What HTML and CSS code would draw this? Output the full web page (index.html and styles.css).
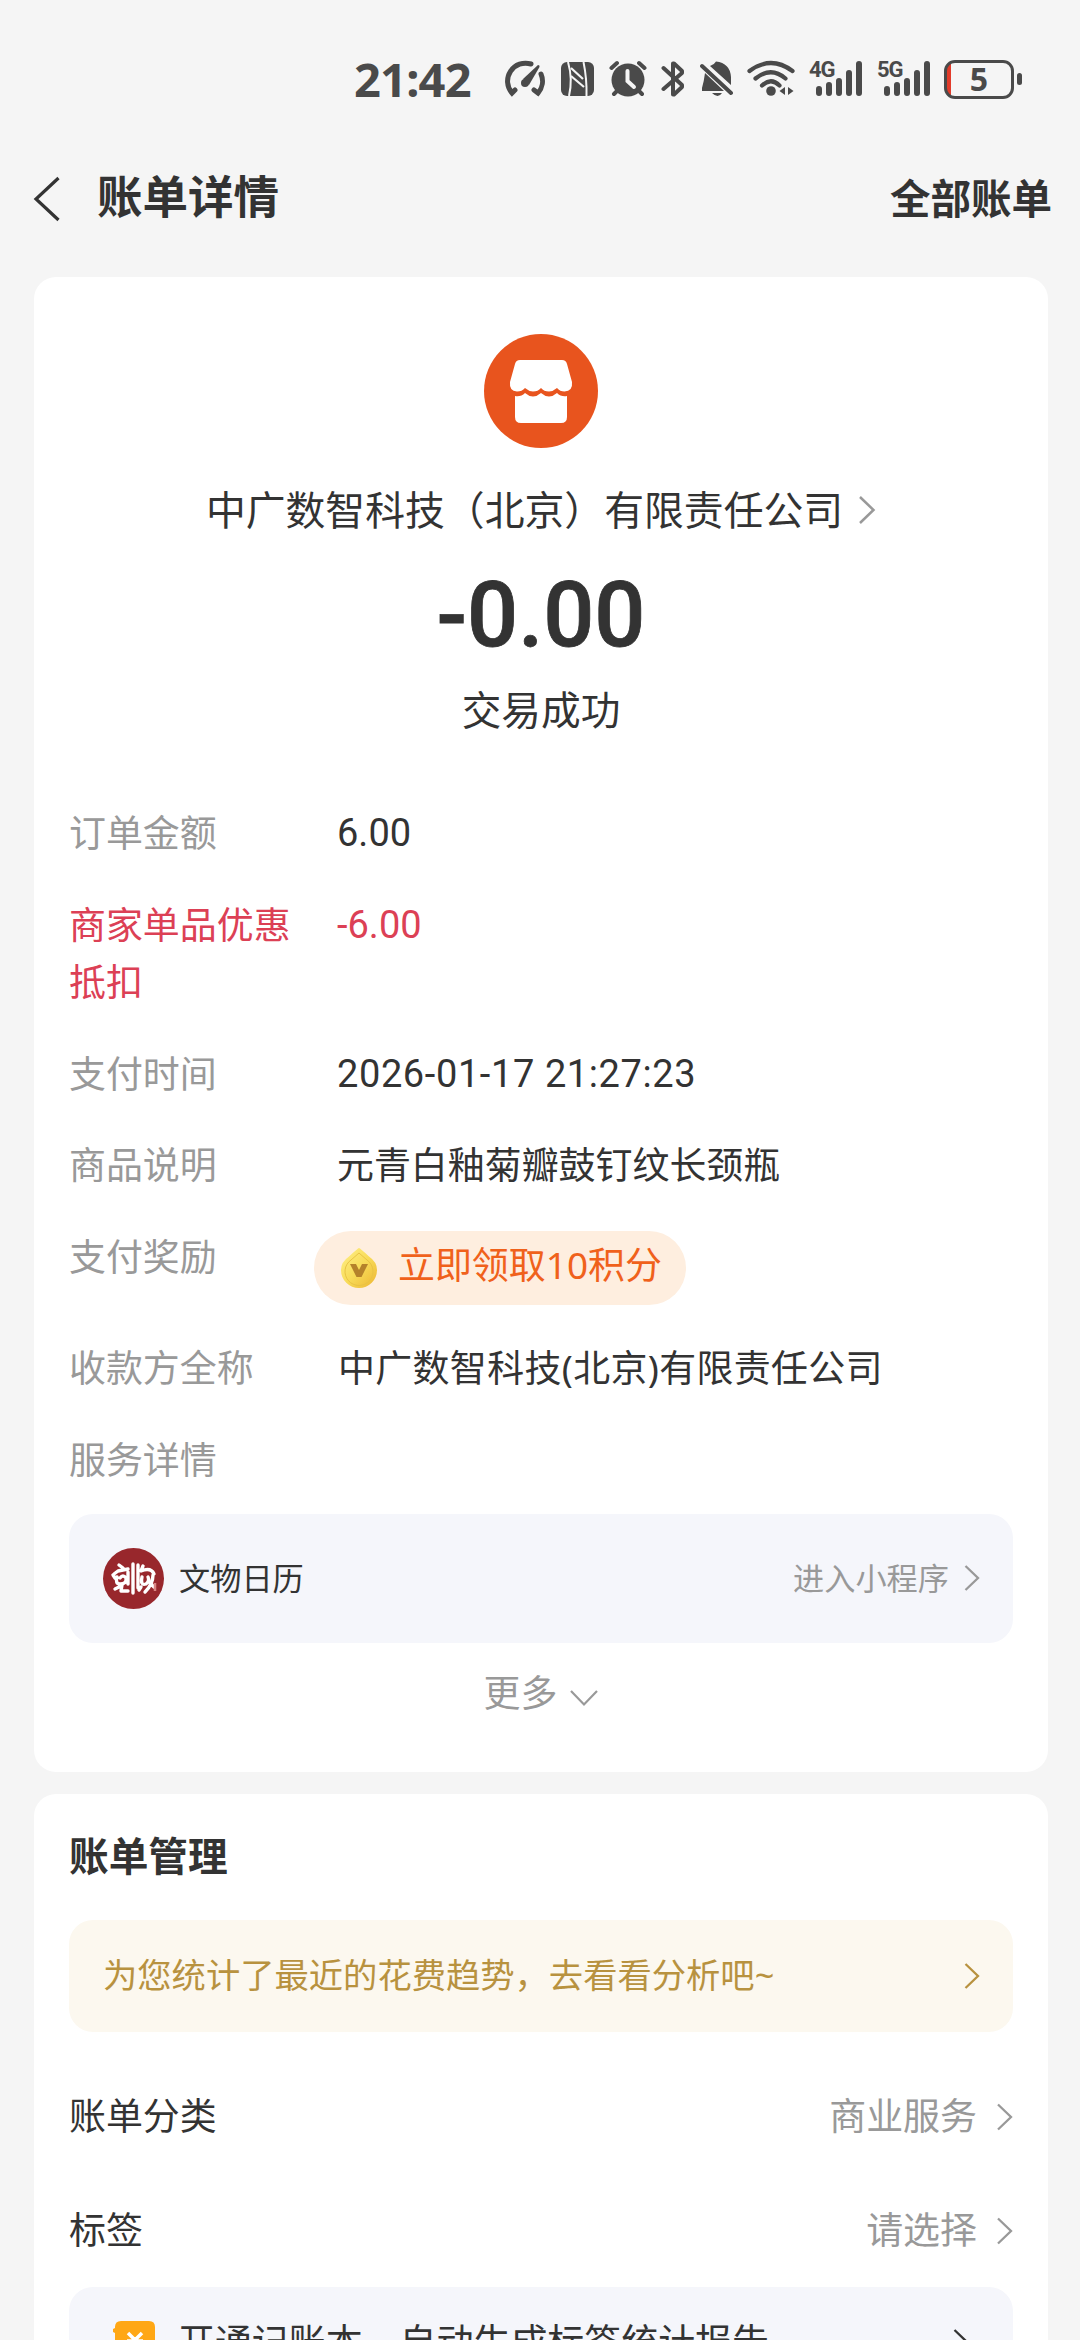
FILE: index.html
```html
<!DOCTYPE html>
<html lang="zh-CN">
<head>
<meta charset="utf-8">
<title>账单详情</title>
<link rel="stylesheet" href="styles.css">
</head>
<body>
<div class="screen">
  <div class="statusbar">
    <span class="clock">21:42</span>
    <svg class="gauge" width="42" height="40" viewBox="0 0 42 40" fill="none" stroke="#4a4a4a" stroke-width="5" stroke-linecap="round"><path d="M27 5A18 18 0 0 0 8 34L11 31M37 15A18 18 0 0 1 34 34L30 31"/><circle cx="21" cy="24" r="4" fill="#4a4a4a" stroke="none"/><path d="M19 20L34 6Q36 6 35.500 8L25 26Z" fill="#4a4a4a" stroke="none"/></svg>
    <svg class="nfc" width="33" height="40" viewBox="0 0 33 40"><rect y="3" width="33" height="34" rx="6" fill="#4a4a4a"/><path d="M7 3Q12 20 8 37M22.500 3Q26 20 25.500 37" stroke="#f5f5f5" stroke-width="2" fill="none"/><path d="M10 9L22 20M10 17L23 28" stroke="#f5f5f5" stroke-width="2.200"/></svg>
    <svg class="alarm" width="38" height="40" viewBox="0 0 38 40"><circle cx="19" cy="21" r="16.500" fill="#4a4a4a"/><path d="M2.500 9L8 4M35.500 9L30 4M8 32L5 35M30 32L33 35" stroke="#4a4a4a" stroke-width="4" stroke-linecap="round"/><path d="M18.500 12V22L25 28" fill="none" stroke="#f5f5f5" stroke-width="4" stroke-linecap="round"/></svg>
    <svg class="bluetooth" width="24" height="40" viewBox="0 0 24 40" fill="none" stroke="#4a4a4a" stroke-width="4" stroke-linecap="round" stroke-linejoin="round"><path d="M2.500 9L21 26V28L13 35.500H12V4.500H13L21 12V14L2.500 30"/></svg>
    <svg class="bell" width="33" height="40" viewBox="0 0 33 40" fill="#4a4a4a"><path d="M5 14Q4 22 2 29V32H24ZM10 7Q14 6 16 2.500Q30 4 31 18V26ZM12 34H22Q18 40 12 34Z"/><path d="M2 7L31 34" stroke="#4a4a4a" stroke-width="4" stroke-linecap="round"/></svg>
    <svg class="wifi" width="48" height="40" viewBox="0 0 48 40" fill="none" stroke="#4a4a4a" stroke-width="4.200" stroke-linecap="round"><path d="M2.500 12Q24-4 45.500 12M8.500 19.500Q24 7 38.500 19.500M15 26.500Q24 18 32.500 26.500"/><circle cx="24" cy="32" r="4.800" fill="#4a4a4a" stroke="none"/><path d="M38 28V36L32.500 32ZM41 28V36L46.500 32Z" fill="#4a4a4a" stroke="none"/></svg>
    <div class="signal"><span class="net">4G</span><svg width="46" height="40" viewBox="0 0 46 40" stroke="#4a4a4a" stroke-width="6" stroke-linecap="round"><path d="M3 30V34M13 26V34M23 22V34M33 14V34M43 5V34"/></svg></div>
    <div class="signal second"><span class="net">5G</span><svg width="46" height="40" viewBox="0 0 46 40" stroke="#4a4a4a" stroke-width="6" stroke-linecap="round"><path d="M3 30V34M13 26V34M23 22V34M33 14V34M43 5V34"/></svg></div>
    <div class="battery"><span class="charge">5</span></div><i class="nub"></i>
  </div>

  <header class="navbar">
    <svg width="28" height="46" viewBox="0 0 28 46" fill="none" stroke="#333" stroke-width="3.200"><path d="M25.500 2L3 23L25.500 44"/></svg>
    <h1>账单详情</h1>
    <a class="all">全部账单</a>
  </header>

  <main>
    <section class="card detail">
      <svg class="avatar" width="114" height="114" viewBox="0 0 114 114"><circle cx="57" cy="57" r="57" fill="#e8541e"/><path d="M36 26H78Q82 26 83 30L88 48Q89 57 80.500 57.500Q76 57.500 73 54Q69 57.500 65 57.500Q60 57.500 57 54Q54 57.500 49 57.500Q45 57.500 41 54Q38 57.500 33 57.500Q25 57 26 48L31 30Q32 26 36 26Z" fill="#fff"/><path d="M31 62Q37 63 41 59Q49 66 57 59Q65 66 73 59Q77 63 83 62V83Q83 89 77 89H37Q31 89 31 83Z" fill="#fff"/></svg>
      <div class="merchant">中广数智科技（北京）有限责任公司<svg width="18" height="28" viewBox="0 0 18 28" fill="none" stroke="#999" stroke-width="2.500"><path d="M2 1L15.500 14L2 27"/></svg></div>
      <div class="amount">-0.00</div>
      <div class="state">交易成功</div>

      <dl class="rows">
        <div class="row"><dt>订单金额</dt><dd class="num">6.00</dd></div>
        <div class="row discount"><dt>商家单品优惠抵扣</dt><dd class="num">-6.00</dd></div>
        <div class="row"><dt>支付时间</dt><dd class="num date">2026-01-17 21:27:23</dd></div>
        <div class="row"><dt>商品说明</dt><dd>元青白釉菊瓣鼓钉纹长颈瓶</dd></div>
        <div class="row reward"><dt>支付奖励</dt><dd class="pill"><svg width="38" height="42" viewBox="0 0 38 42"><defs><linearGradient id="gold" x1="0" y1="0" x2="1" y2="1"><stop offset="0" stop-color="#fff08a"/><stop offset=".5" stop-color="#f8dc59"/><stop offset="1" stop-color="#edb532"/></linearGradient></defs><path d="M19 1Q20 1 29 9.500Q37 15 37 23A18 18 0 0 1 1 23Q1 15 9 9.500Q18 1 19 1Z" fill="url(#gold)"/><path d="M19 6L27 13A14 14 0 1 1 11 13Z" fill="none" stroke="#e9c344"/><path d="M10 17H16L19 23L22 17H28L21.500 30H16.500Z" fill="#b5822a"/></svg><span>立即领取10积分</span></dd></div>
        <div class="row"><dt>收款方全称</dt><dd class="payee">中广数智科技(北京)有限责任公司</dd></div>
        <div class="row"><dt>服务详情</dt></div>
      </dl>

      <div class="box service">
        <svg class="logo" width="61" height="61" viewBox="0 0 61 61"><circle cx="30.500" cy="30.500" r="30.500" fill="#98272c"/><g fill="none" stroke="#fff" stroke-width="3.400" stroke-linecap="round" stroke-linejoin="round"><path d="M16 17L20 20M11 26L15 23L25 21M10 27L12 30M14 29Q12 36 17 36Q24 36 23 30Q20 26 17 30M16 39L12 41M19 37L18 43H25M25 24V36M30 16V45M35 17V40M40 18L38 23Q48 19 51 26M39 29Q37 38 43 36Q47 33 45 29M50 27Q50 36 42 44M38 39L36 42M47 35L51 39"/></g><path d="M52 35V43" stroke="#d98482" stroke-width="2.500"/></svg>
        <span class="name">文物日历</span>
        <span class="enter">进入小程序</span>
        <svg width="16" height="26" viewBox="0 0 16 26" fill="none" stroke="#999" stroke-width="2.300"><path d="M1.500 1L14 13L1.500 25"/></svg>
      </div>
      <div class="more"><span>更多</span><svg width="28" height="18" viewBox="0 0 28 18" fill="none" stroke="#999" stroke-width="2.200"><path d="M1 2L14 15.500L27 2"/></svg></div>
    </section>

    <section class="card manage">
      <h2>账单管理</h2>
      <div class="box trend"><span>为您统计了最近的花费趋势，去看看分析吧~</span><svg width="16" height="26" viewBox="0 0 16 26" fill="none" stroke="#b8923f" stroke-width="2.300"><path d="M1.500 1L14 13L1.500 25"/></svg></div>
      <div class="option first"><span>账单分类</span><span class="value">商业服务</span><svg width="16" height="28" viewBox="0 0 16 28" fill="none" stroke="#999" stroke-width="2.300"><path d="M1 1.500L14 14L1 26.500"/></svg></div>
      <div class="option"><span>标签</span><span class="value">请选择</span><svg width="16" height="28" viewBox="0 0 16 28" fill="none" stroke="#999" stroke-width="2.300"><path d="M1 1.500L14 14L1 26.500"/></svg></div>
      <div class="box ledger">
        <svg class="book" width="42" height="42" viewBox="0 0 42 42"><path d="M8 0H36Q42 0 42 6V36Q42 42 36 42H8Q2 42 2 36V12L0 11V8L2 7V6Q2 0 8 0Z" fill="#ffa715"/><path d="M15 12L22 19L29 12M14 20H30M14 27H30M22 19V34" fill="none" stroke="#fff" stroke-width="3.500"/></svg>
        <span>开通记账本，自动生成标签统计报告</span>
        <svg width="16" height="26" viewBox="0 0 16 26" fill="none" stroke="#333" stroke-width="2.300"><path d="M1.500 1L14 13L1.500 25"/></svg>
      </div>
    </section>
  </main>
</div>
</body>
</html>
```
FILE: styles.css
```css
* { box-sizing: border-box; }
body {
  margin: 0;
  background: #f5f5f5;
  color: #333;
  font-family: "Noto Sans", "Noto Sans CJK SC", sans-serif;
  font-size: 36.95px;
}
svg { display: block; flex: none; }
h1, h2, dl, dd { margin: 0; }
.screen { width: 1080px; height: 2340px; overflow: hidden; }

/* system status bar */
.statusbar {
  display: flex;
  align-items: center;
  height: 158px;
  padding-left: 354px;
  color: #4a4a4a;
}
.clock { width: 150px; font-size: 47px; font-weight: 700; line-height: 60px; letter-spacing: -0.8px; }
.nfc { margin-left: 15px; }
.alarm { margin-left: 15px; }
.bluetooth { margin-left: 14px; }
.bell { margin-left: 15px; }
.wifi { margin-left: 14px; }
.signal { display: grid; width: 53px; height: 40px; margin-left: 14px; justify-items: end; }
.signal.second { margin-left: 15px; }
.signal > * { grid-area: 1 / 1; }
.net { justify-self: start; font: 700 22px/22px Roboto, sans-serif; letter-spacing: -1px; }
.battery {
  display: flex;
  align-items: center;
  justify-content: center;
  width: 70px;
  height: 39px;
  margin-left: 14px;
  border: 3px solid #4a4a4a;
  border-radius: 11px;
  background: linear-gradient(90deg, #e23b2a 4px, transparent 4px);
}
.charge { display: block; font: 700 32px/32px "Noto Sans", sans-serif; }
.nub { width: 5px; height: 12px; margin-left: 3px; border-radius: 3px; background: #4a4a4a; }

/* page title bar */
.navbar { display: flex; align-items: center; height: 119px; padding: 0 28px 37px 33px; }
.navbar h1 { margin: -6px 0 0 36px; font-size: 45.5px; line-height: 60px; }
.all { margin-left: auto; font-size: 40.5px; font-weight: 700; line-height: 56px; }

.card { margin: 0 32px 22px 34px; padding: 0 35px; border-radius: 22px; background: #fff; }
.box { display: flex; align-items: center; border-radius: 24px; background: #f5f6fb; }

/* transaction summary */
.detail { height: 1495px; padding-top: 57px; }
.avatar { margin: 0 auto; }
.merchant {
  display: flex;
  align-items: center;
  justify-content: center;
  gap: 15px;
  margin-top: 34px;
  font-size: 39.85px;
  line-height: 56px;
}
.amount { margin-top: 33px; text-align: center; font: 500 90px/90px Roboto, sans-serif; -webkit-text-stroke: 0.8px #333; }
.state { margin-top: 21px; text-align: center; font-size: 39.7px; line-height: 56px; }

.rows { display: grid; gap: 34.8px; margin-top: 67px; line-height: 57px; }
.row { display: flex; align-items: flex-start; }
dt { width: 268px; padding-right: 40px; color: #999; }
.num { font-family: Roboto, sans-serif; font-size: 38px; }
.date { letter-spacing: 0.6px; }
.discount, .discount dt { color: #dc4055; }
.reward { height: 76px; }
.pill {
  display: flex;
  align-items: center;
  gap: 20px;
  height: 74px;
  margin: 2px 0 0 -23px;
  padding: 0 24px 0 26px;
  border-radius: 37px;
  background: #feeedf;
  color: #f0611b;
}
.pill span { margin-top: -5px; }
.payee { padding-left: 1px; letter-spacing: 0.35px; }

.service { height: 129px; margin-top: 25px; padding: 0 33px 0 34px; font-size: 31.2px; }
.name, .enter { position: relative; top: -2px; }
.name { margin-left: 15px; }
.enter { margin: 0 15px 0 auto; color: #999; }
.more { display: flex; align-items: center; justify-content: center; gap: 13px; margin-top: 23px; line-height: 56px; color: #999; }
.more span { margin-top: -1px; }
.more svg { margin-top: 10px; }

/* bill management */
.manage { height: 600px; padding-top: 32px; }
h2 { font-size: 39.7px; line-height: 60px; }
.trend { height: 112px; margin-top: 34px; padding: 0 33px 0 34px; background: #fcf8ef; color: #b8923f; font-size: 34.3px; }
.trend span { margin-top: -6px; }
.trend svg { margin-left: auto; }
.option { display: flex; align-items: center; height: 114px; }
.option.first { margin-top: 26px; }
.option span { margin-top: -3px; }
.option .value { margin-left: auto; margin-right: 20px; color: #999; }
.option svg { margin-top: 4px; }
.ledger { height: 110px; padding: 0 44px; margin-top: 1px; }
.ledger span { margin-top: -4px; }
.book { margin: 0 23px 0 0; }
.ledger svg:last-child { margin-left: auto; }
```
